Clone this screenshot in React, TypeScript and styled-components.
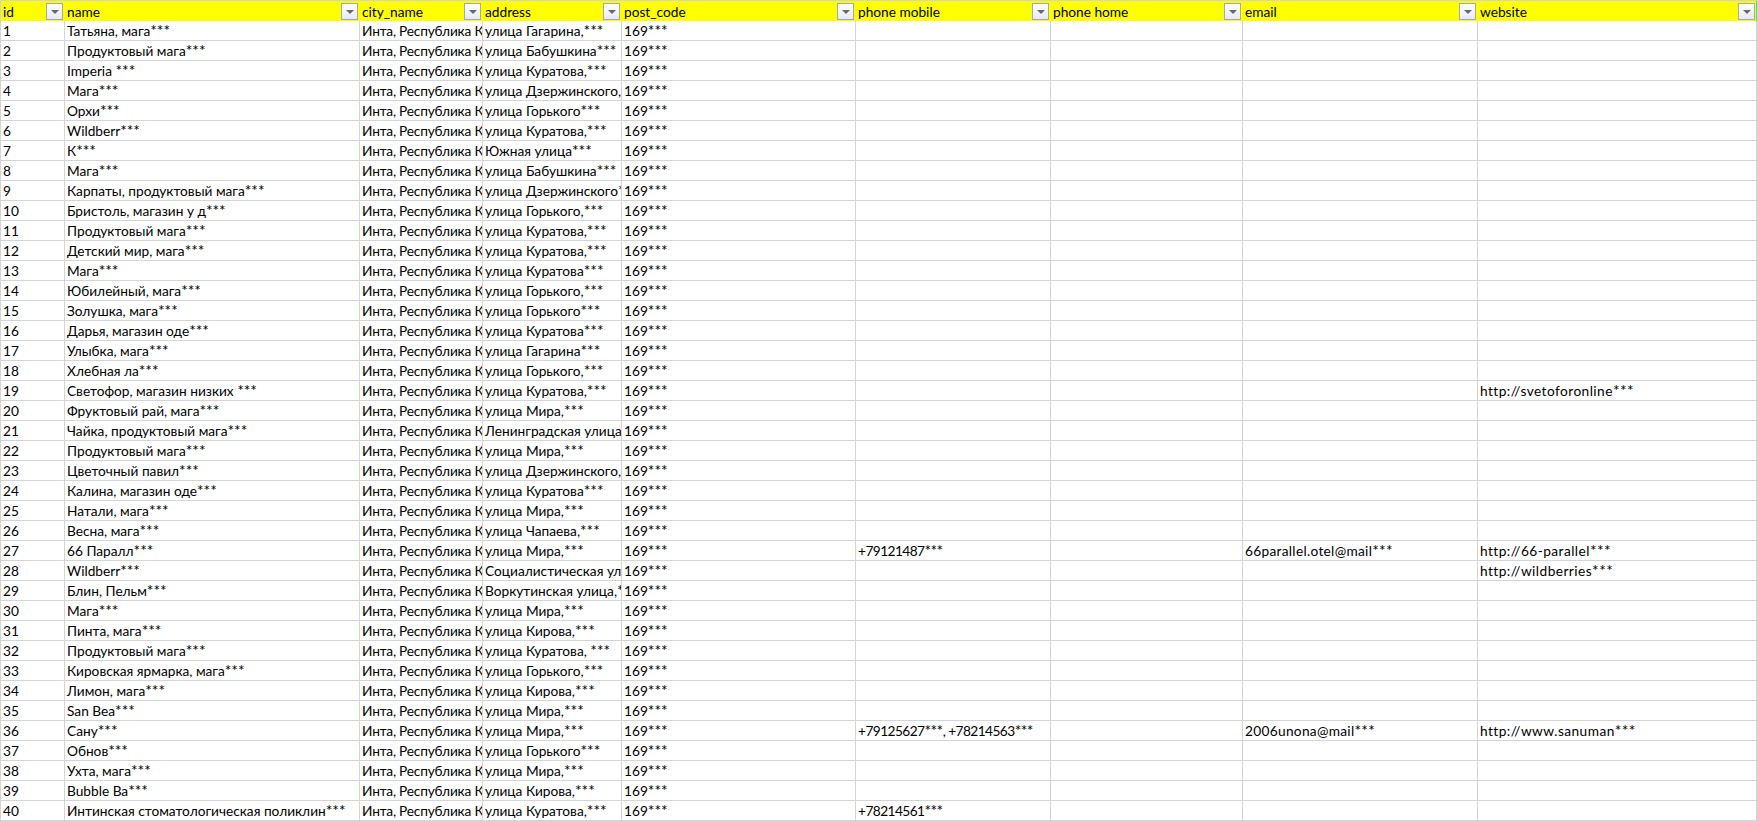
import React from "react";
import styled, { createGlobalStyle } from "styled-components";

const Global = createGlobalStyle`
  html, body { margin: 0; padding: 0; background: #fff; }
  body { overflow: hidden; }
`;

const Sheet = styled.table`
  border-collapse: separate;
  border-spacing: 0;
  table-layout: fixed;
  width: 1757px;
  border-top: 1px solid #d4d4d4;
  font-family: "Lato", "Noto Sans", sans-serif;
  font-size: 13.7px;
  color: #000;
`;

const HeadCell = styled.th<{ $last?: boolean }>`
  height: 20px;
  padding: 0 1px 0 2px;
  background: #ffff00;
  font-weight: 400;
  text-align: left;
  box-sizing: border-box;
  border-right: 1px solid ${(p) => (p.$last ? "#4fe08f" : "#ffff00")};
  &:first-child { border-left: 1px solid #d4d4d4; }
`;

const HeadInner = styled.div`
  display: flex;
  align-items: center;
  justify-content: space-between;
  height: 20px;
`;

const FilterButton = styled.span`
  display: flex;
  align-items: center;
  justify-content: center;
  width: 17px;
  height: 17px;
  box-sizing: border-box;
  border: 1px solid #a3a8b5;
  background: linear-gradient(#ffffff, #e6eaf2);
  flex: none;
`;

const Arrow = styled.span`
  width: 0;
  height: 0;
  margin-top: 1px;
  border-left: 4px solid transparent;
  border-right: 4px solid transparent;
  border-top: 4px solid #66686e;
`;

const Cell = styled.td<{ $spacing?: number }>`
  height: 20px;
  padding: 0 0 0 2px;
  box-sizing: border-box;
  border-right: 1px solid #d4d4d4;
  border-bottom: 1px solid #d4d4d4;
  white-space: nowrap;
  overflow: hidden;
  line-height: 18px;
  letter-spacing: ${(p) => p.$spacing ?? 0}px;
  &:first-child { border-left: 1px solid #d4d4d4; }
`;

const Stars = styled.span`
  font-size: 15.5px;
  line-height: 0;
`;

const columns: [string, number][] = [
  ["id", 65],
  ["name", 295],
  ["city_name", 123],
  ["address", 139],
  ["post_code", 234],
  ["phone mobile", 195],
  ["phone home", 192],
  ["email", 235],
  ["website", 279],
];

type Extra = { phone?: string; email?: string; site?: string };

const rows: [string, string, Extra?][] = [
  ["Татьяна, мага***", "улица Гагарина,***"],
  ["Продуктовый мага***", "улица Бабушкина***"],
  ["Imperia ***", "улица Куратова,***"],
  ["Мага***", "улица Дзержинского,***"],
  ["Орхи***", "улица Горького***"],
  ["Wildberr***", "улица Куратова,***"],
  ["К***", "Южная улица***"],
  ["Мага***", "улица Бабушкина***"],
  ["Карпаты, продуктовый мага***", "улица Дзержинского***"],
  ["Бристоль, магазин у д***", "улица Горького,***"],
  ["Продуктовый мага***", "улица Куратова,***"],
  ["Детский мир, мага***", "улица Куратова,***"],
  ["Мага***", "улица Куратова***"],
  ["Юбилейный, мага***", "улица Горького,***"],
  ["Золушка, мага***", "улица Горького***"],
  ["Дарья, магазин оде***", "улица Куратова***"],
  ["Улыбка, мага***", "улица Гагарина***"],
  ["Хлебная ла***", "улица Горького,***"],
  ["Светофор, магазин низких ***", "улица Куратова,***", { site: "http://svetoforonline***" }],
  ["Фруктовый рай, мага***", "улица Мира,***"],
  ["Чайка, продуктовый мага***", "Ленинградская улица***"],
  ["Продуктовый мага***", "улица Мира,***"],
  ["Цветочный павил***", "улица Дзержинского,***"],
  ["Калина, магазин оде***", "улица Куратова***"],
  ["Натали, мага***", "улица Мира,***"],
  ["Весна, мага***", "улица Чапаева,***"],
  ["66 Паралл***", "улица Мира,***", { phone: "+79121487***", email: "66parallel.otel@mail***", site: "http://66-parallel***" }],
  ["Wildberr***", "Социалистическая улица***", { site: "http://wildberries***" }],
  ["Блин, Пельм***", "Воркутинская улица,***"],
  ["Мага***", "улица Мира,***"],
  ["Пинта, мага***", "улица Кирова,***"],
  ["Продуктовый мага***", "улица Куратова, ***"],
  ["Кировская ярмарка, мага***", "улица Горького,***"],
  ["Лимон, мага***", "улица Кирова,***"],
  ["San Bea***", "улица Мира,***"],
  ["Сану***", "улица Мира,***", { phone: "+79125627***, +78214563***", email: "2006unona@mail***", site: "http://www.sanuman***" }],
  ["Обнов***", "улица Горького***"],
  ["Ухта, мага***", "улица Мира,***"],
  ["Bubble Ba***", "улица Кирова,***"],
  ["Интинская стоматологическая поликлин***", "улица Куратова,***", { phone: "+78214561***" }],
];

function Masked({ text }: { text?: string }) {
  if (!text) return null;
  return (
    <>
      {text.split(/(\*\*\*)/).map((part, i) =>
        part === "***" ? <Stars key={i}>{part}</Stars> : part
      )}
    </>
  );
}

export default function App() {
  return (
    <>
      <Global />
      <Sheet>
        <colgroup>
          {columns.map(([title, width]) => (
            <col key={title} style={{ width }} />
          ))}
        </colgroup>
        <thead>
          <tr>
            {columns.map(([title], i) => (
              <HeadCell key={title} $last={i === columns.length - 1}>
                <HeadInner>
                  {title}
                  <FilterButton>
                    <Arrow />
                  </FilterButton>
                </HeadInner>
              </HeadCell>
            ))}
          </tr>
        </thead>
        <tbody>
          {rows.map(([name, address, extra], i) => (
            <tr key={i}>
              <Cell>{i + 1}</Cell>
              <Cell><Masked text={name} /></Cell>
              <Cell $spacing={-0.2}>Инта, Республика Коми</Cell>
              <Cell><Masked text={address} /></Cell>
              <Cell><Masked text="169***" /></Cell>
              <Cell $spacing={-0.55}><Masked text={extra?.phone} /></Cell>
              <Cell />
              <Cell $spacing={0.3}><Masked text={extra?.email} /></Cell>
              <Cell $spacing={0.45}><Masked text={extra?.site} /></Cell>
            </tr>
          ))}
        </tbody>
      </Sheet>
    </>
  );
}
